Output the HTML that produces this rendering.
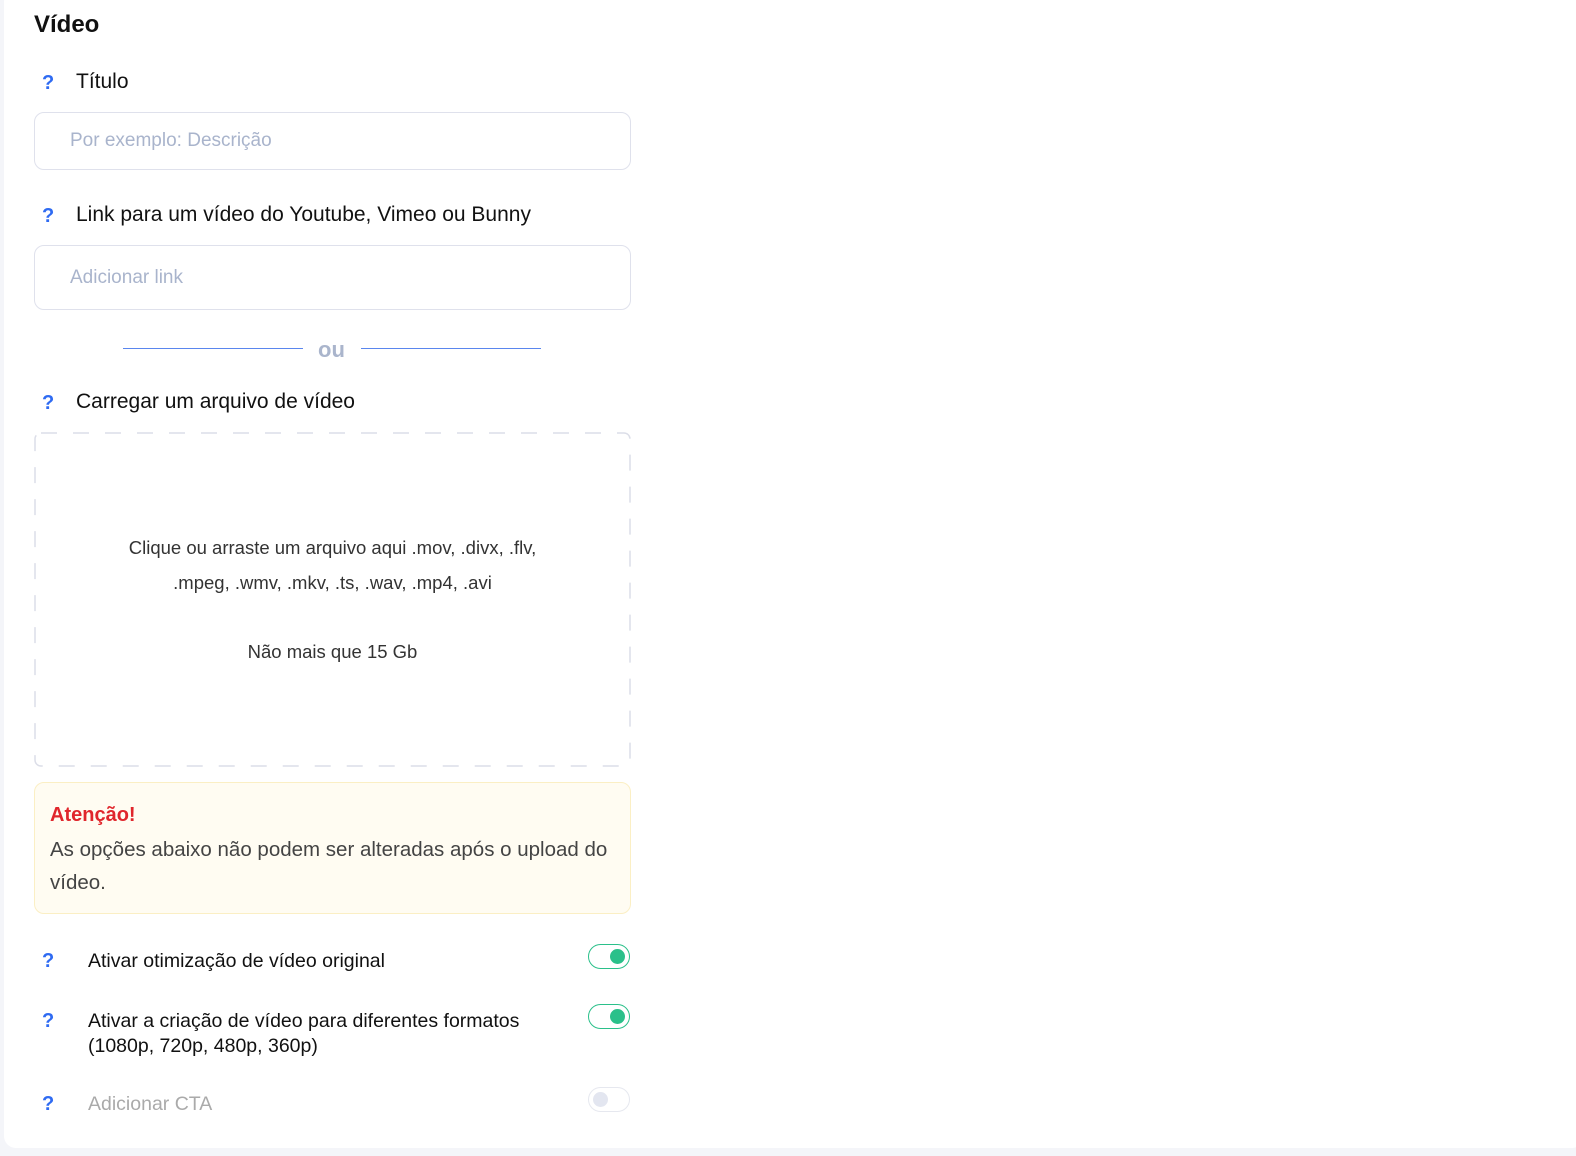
<!DOCTYPE html>
<html><head><meta charset="utf-8"><style>
html,body{margin:0;padding:0;width:1576px;height:1156px;background:#f4f5f9;overflow:hidden;font-family:"Liberation Sans",sans-serif;}
.card{position:absolute;left:4px;top:-10px;width:1580px;height:1158px;background:#fff;border-radius:12px;}
.a{position:absolute;white-space:nowrap;}
.q{color:#2f6bf2;font-size:20px;font-weight:bold;}
.lbl{font-size:21px;color:#111;}
.inp{position:absolute;left:34px;width:595px;border:1px solid #dfe1ec;border-radius:10px;background:#fff;}
.ph{color:#a9b4cc;font-size:19px;}
.tg{position:absolute;left:588px;width:40px;height:23px;border:1.5px solid #2bc08a;border-radius:13px;}
.tg i{position:absolute;right:4px;top:4px;width:15px;height:15px;border-radius:50%;background:#2bc08a;}
</style></head><body>
<div class="card"></div>
<div class="a" style="left:34px;top:11px;font-size:24px;font-weight:bold;color:#111">Vídeo</div>
<div class="a q" style="left:42px;top:72px">?</div>
<div class="a lbl" style="left:76px;top:70px">Título</div>
<div class="inp" style="top:112px;height:56px"></div>
<div class="a ph" style="left:70px;top:130px">Por exemplo: Descrição</div>
<div class="a q" style="left:42px;top:205px">?</div>
<div class="a lbl" style="left:76px;top:203px">Link para um vídeo do Youtube, Vimeo ou Bunny</div>
<div class="inp" style="top:245px;height:63px"></div>
<div class="a ph" style="left:70px;top:267px">Adicionar link</div>
<div class="a" style="left:123px;top:348px;width:180px;height:1px;background:#5a86ee"></div>
<div class="a" style="left:361px;top:348px;width:180px;height:1px;background:#5a86ee"></div>
<div class="a" style="left:318px;top:337px;font-size:22px;font-weight:bold;color:#aab5cc">ou</div>
<div class="a q" style="left:42px;top:392px">?</div>
<div class="a lbl" style="left:76px;top:390px">Carregar um arquivo de vídeo</div>
<svg class="a" style="left:34px;top:432px" width="597" height="335"><rect x="1" y="1" width="595" height="333" rx="6" fill="none" stroke="#dcdee8" stroke-width="1.5" stroke-dasharray="16 16"/></svg>
<div class="a" style="left:34px;top:530px;width:597px;text-align:center;font-size:18.5px;color:#333;line-height:35px;white-space:normal">Clique ou arraste um arquivo aqui .mov, .divx, .flv,<br>.mpeg, .wmv, .mkv, .ts, .wav, .mp4, .avi</div>
<div class="a" style="left:34px;top:641px;width:597px;text-align:center;font-size:18.5px;color:#333">Não mais que 15 Gb</div>
<div class="a" style="left:34px;top:782px;width:595px;height:130px;background:#fffcf2;border:1px solid #fbefc4;border-radius:10px"></div>
<div class="a" style="left:50px;top:804px;font-size:20px;font-weight:bold;color:#e0262c">Atenção!</div>
<div class="a" style="left:50px;top:833px;font-size:20.5px;color:#444;line-height:33px;white-space:normal;width:575px">As opções abaixo não podem ser alteradas após o upload do vídeo.</div>
<div class="a q" style="left:42px;top:950px">?</div>
<div class="a" style="left:88px;top:950px;font-size:19.5px;color:#111">Ativar otimização de vídeo original</div>
<div class="tg" style="top:944px"><i></i></div>
<div class="a q" style="left:42px;top:1010px">?</div>
<div class="a" style="left:88px;top:1009px;font-size:19.5px;color:#111;line-height:25px">Ativar a criação de vídeo para diferentes formatos<br>(1080p, 720p, 480p, 360p)</div>
<div class="tg" style="top:1004px"><i></i></div>
<div class="a q" style="left:42px;top:1093px">?</div>
<div class="a" style="left:88px;top:1093px;font-size:19.5px;color:#aaa">Adicionar CTA</div>
<div class="tg" style="top:1087px;border-color:#e6e8ef"><i style="left:4px;right:auto;background:#e3e6f0"></i></div>
</body></html>
